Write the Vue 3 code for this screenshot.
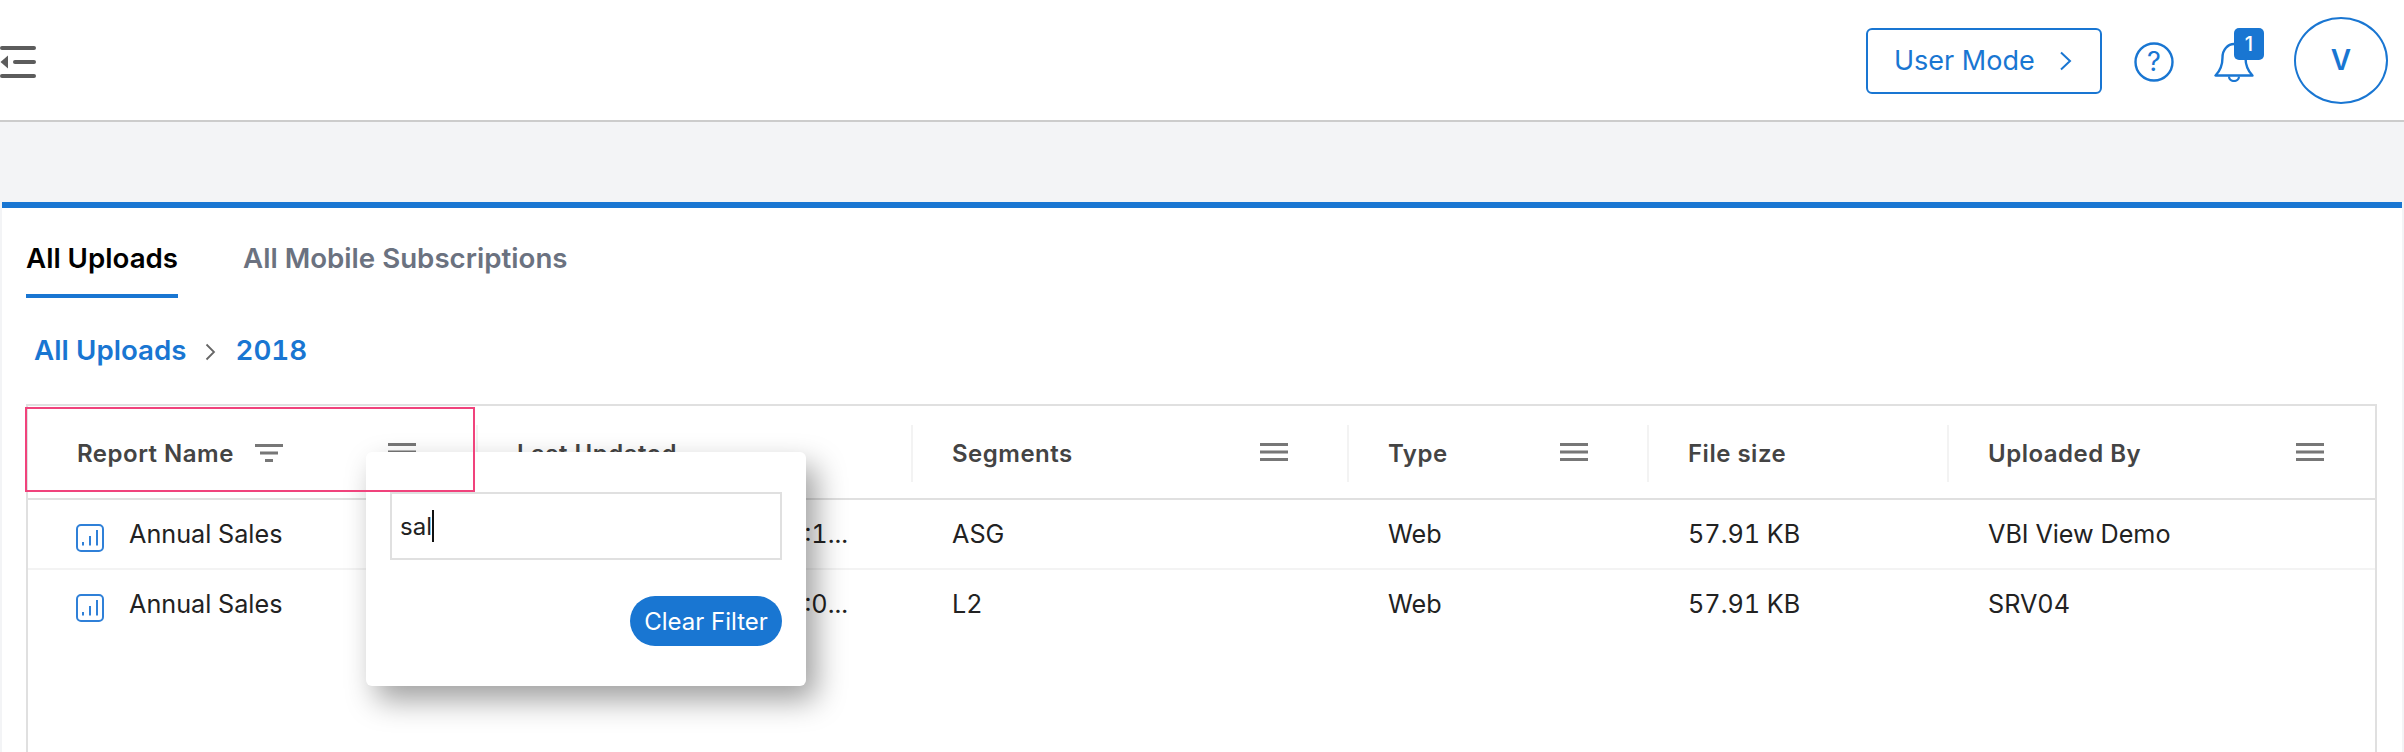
<template>
  <div class="page">
    <header class="topbar">
      <svg class="collapse-icon" width="36" height="32" viewBox="0 0 36 32">
        <rect x="0" y="0" width="36" height="4" rx="2" fill="#5c5c5c" />
        <path d="M8 9.5V22.5L0.5 16z" fill="#5c5c5c" />
        <rect x="13" y="14" width="23" height="4" rx="2" fill="#5c5c5c" />
        <rect x="0" y="28" width="36" height="4" rx="2" fill="#5c5c5c" />
      </svg>
      <div class="top-actions">
        <button class="mode-btn">
          <span>User Mode</span>
          <svg width="13" height="20" viewBox="0 0 13 20" fill="none">
            <path d="M2 1.5L11 10L2 18.5" stroke="#1976d2" stroke-width="2" />
          </svg>
        </button>
        <svg class="help-icon" width="40" height="42" viewBox="0 0 40 42" fill="none">
          <circle cx="20" cy="21" r="18.5" stroke="#1976d2" stroke-width="2.4" />
          <text x="20" y="30" text-anchor="middle" class="help-mark">?</text>
        </svg>
        <div class="bell">
          <svg width="40" height="40" viewBox="0 0 40 40" fill="none">
            <path d="M1.5 33.5H38.5C33.5 28.5 31.5 23 31.5 15.5C31.5 7.5 26 2 20 2S8.5 7.5 8.5 15.5C8.5 23 6.5 28.5 1.5 33.5Z" stroke="#1976d2" stroke-width="2.4" stroke-linejoin="round" />
            <path d="M15 34.5A5 4.5 0 0 0 25 34.5" stroke="#1976d2" stroke-width="2.2" />
          </svg>
          <span class="badge">1</span>
        </div>
        <div class="avatar">V</div>
      </div>
    </header>

    <main class="content">
      <section class="card">
        <nav class="tabs">
          <a class="tab active">All Uploads</a>
          <a class="tab">All Mobile Subscriptions</a>
        </nav>
        <div class="crumbs">
          <a>All Uploads</a>
          <svg width="11" height="18" viewBox="0 0 11 18" fill="none">
            <path d="M1.5 1.5L9 9L1.5 16.5" stroke="#666" stroke-width="1.8" />
          </svg>
          <a>2018</a>
        </div>

        <div class="grid">
          <div class="grid-head">
            <div v-for="col in columns" :key="col.label" class="th">
              <span class="th-label">{{ col.label }}</span>
              <svg v-if="col.filtered" class="filter-icon" width="28" height="18" viewBox="0 0 28 18">
                <rect x="0" y="0" width="28" height="3" fill="#777" />
                <rect x="5" y="7.5" width="18" height="3" fill="#777" />
                <rect x="10" y="15" width="8" height="3" fill="#777" />
              </svg>
              <svg v-if="col.menu" class="menu-icon" width="28" height="18" viewBox="0 0 28 18">
                <rect x="0" y="0" width="28" height="3" fill="#777" />
                <rect x="0" y="7.5" width="28" height="3" fill="#777" />
                <rect x="0" y="15" width="28" height="3" fill="#777" />
              </svg>
            </div>
          </div>
          <div v-for="row in rows" :key="row.segment" class="grid-row">
            <div class="td name-cell">
              <svg width="28" height="28" viewBox="0 0 28 28" fill="none">
                <rect x="1" y="1" width="26" height="26" rx="4" stroke="#2f80d8" stroke-width="2" />
                <path d="M7 21.5V18M14 21.5V12M21 21.5V6" stroke="#2f80d8" stroke-width="2" />
              </svg>
              <span>Annual Sales</span>
            </div>
            <div class="td"><span class="date">{{ row.updated }}</span></div>
            <div class="td">{{ row.segment }}</div>
            <div class="td">Web</div>
            <div class="td">57.91 KB</div>
            <div class="td">{{ row.user }}</div>
          </div>

          <div class="filter-popup">
            <div class="filter-input"><span>sal</span><i class="caret"></i></div>
            <button class="clear-btn">Clear Filter</button>
          </div>
          <div class="highlight"></div>
        </div>
      </section>
    </main>
  </div>
</template>

<script setup>
const columns = [
  { label: 'Report Name', filtered: true, menu: true },
  { label: 'Last Updated' },
  { label: 'Segments', menu: true },
  { label: 'Type', menu: true },
  { label: 'File size' },
  { label: 'Uploaded By', menu: true }
]

const rows = [
  { updated: 'Oct 24, 2018, 08:1...', segment: 'ASG', user: 'VBI View Demo' },
  { updated: 'Oct 24, 2018, 09:0...', segment: 'L2', user: 'SRV04' }
]
</script>

<style>
html,
body {
  margin: 0;
  background: #f3f4f6;
}
</style>

<style scoped>
.page {
  width: 2404px;
  height: 752px;
  overflow: hidden;
  display: flex;
  flex-direction: column;
  font-family: Inter, "Liberation Sans", sans-serif;
  background: #f3f4f6;
}

.topbar {
  height: 120px;
  flex: none;
  display: flex;
  align-items: center;
  justify-content: space-between;
  background: #fff;
  border-bottom: 2px solid #ccc;
}

.collapse-icon {
  margin-top: 4px;
}

.top-actions {
  display: flex;
  align-items: center;
  padding-right: 16px;
}

.mode-btn {
  width: 236px;
  height: 66px;
  display: flex;
  align-items: center;
  justify-content: space-between;
  box-sizing: border-box;
  padding: 0 28px 0 26px;
  margin-top: 1px;
  border: 2px solid #1976d2;
  border-radius: 6px;
  background: #fff;
  color: #1976d2;
  font: 400 27px Inter, sans-serif;
}

.help-icon {
  margin-left: 32px;
  margin-top: 3px;
}

.help-mark {
  font: 400 27px Inter, sans-serif;
  fill: #1976d2;
}

.bell {
  position: relative;
  width: 40px;
  height: 40px;
  margin-left: 40px;
  margin-top: 4px;
}

.badge {
  position: absolute;
  left: 20px;
  top: -14px;
  width: 30px;
  height: 32px;
  border-radius: 5px;
  background: #1976d2;
  color: #fff;
  font-size: 20px;
  font-weight: 500;
  line-height: 32px;
  text-align: center;
}

.avatar {
  width: 94px;
  height: 87px;
  box-sizing: border-box;
  margin-left: 40px;
  border: 2px solid #1976d2;
  border-radius: 50%;
  display: flex;
  align-items: center;
  justify-content: center;
  color: #1976d2;
  font-size: 28px;
  font-weight: 600;
}

.content {
  flex: 1;
  min-height: 0;
  padding: 80px 2px 0;
  display: flex;
}

.card {
  flex: 1;
  min-width: 0;
  background: #fff;
  border-top: 6px solid #1976d2;
  padding: 0 25px 0 24px;
  display: flex;
  flex-direction: column;
}

.tabs {
  display: flex;
  gap: 65px;
  height: 90px;
  flex: none;
}

.tab {
  height: 90px;
  box-sizing: border-box;
  padding-top: 33px;
  font-size: 27.7px;
  line-height: 34px;
  font-weight: 600;
  color: #6b7280;
}

.tab.active {
  color: #000;
  border-bottom: 4px solid #1976d2;
}

.crumbs {
  display: flex;
  align-items: center;
  gap: 19px;
  height: 106px;
  flex: none;
  box-sizing: border-box;
  padding: 0 0 2px 8px;
  font-size: 27.7px;
  font-weight: 600;
  font-feature-settings: "tnum";
  color: #1976d2;
}

.crumbs svg {
  margin-top: 4px;
}

.grid {
  position: relative;
  flex: 1;
  border: 2px solid #e0e0e0;
  border-bottom: none;
  color: #222;
}

.grid-head,
.grid-row {
  display: grid;
  grid-template-columns: 448px 435px 436px 300px 300px 1fr;
}

.grid-head {
  height: 92px;
  align-items: center;
  border-bottom: 2px solid #e0e0e0;
}

.grid-row {
  height: 68px;
  align-items: center;
  border-bottom: 2px solid #f3f3f3;
}

.grid-row + .grid-row {
  border-bottom: none;
}

.th {
  height: 57px;
  display: flex;
  align-items: center;
  margin-top: 2px;
  padding-left: 39px;
  padding-right: 59px;
  border-left: 2px solid #f3f3f3;
  font-size: 24px;
  letter-spacing: 0.5px;
  font-weight: 600;
  color: #444;
}

.th:first-child {
  border-left: none;
  padding-left: 49px;
  padding-right: 60px;
}

.th:last-child {
  padding-right: 51px;
}

.filter-icon {
  margin-left: 21px;
}

.menu-icon {
  margin-left: auto;
  margin-top: -3px;
}

.th-label {
  white-space: nowrap;
}

.td {
  padding-left: 41px;
  font-size: 25.2px;
  font-feature-settings: "tnum";
  white-space: nowrap;
  margin-top: -1px;
}

.name-cell {
  display: flex;
  align-items: center;
  gap: 25px;
  padding-left: 48px;
}

.name-cell svg {
  margin-top: 9px;
}

.date {
  display: block;
  width: 331px;
  overflow: hidden;
  text-align: right;
}

.filter-popup {
  position: absolute;
  left: 338px;
  top: 46px;
  width: 440px;
  height: 234px;
  box-sizing: border-box;
  padding: 40px 24px 0;
  display: flex;
  flex-direction: column;
  align-items: flex-end;
  background: #fff;
  border-radius: 6px;
  box-shadow: 10px 14px 30px rgba(0, 0, 0, 0.38);
}

.filter-input {
  width: 100%;
  height: 68px;
  box-sizing: border-box;
  border: 2px solid #e0e0e0;
  display: flex;
  align-items: center;
  padding-left: 8px;
  font-size: 24px;
  color: #222;
}

.caret {
  width: 2px;
  height: 32px;
  background: #111;
}

.clear-btn {
  margin-top: 36px;
  width: 152px;
  height: 50px;
  border: none;
  border-radius: 25px;
  background: #1976d2;
  color: #fff;
  font: 400 24px Inter, sans-serif;
  padding: 0;
}

.highlight {
  position: absolute;
  left: -3px;
  top: 1px;
  width: 450px;
  height: 85px;
  box-sizing: border-box;
  border: 2px solid #f0437c;
  pointer-events: none;
}
</style>
